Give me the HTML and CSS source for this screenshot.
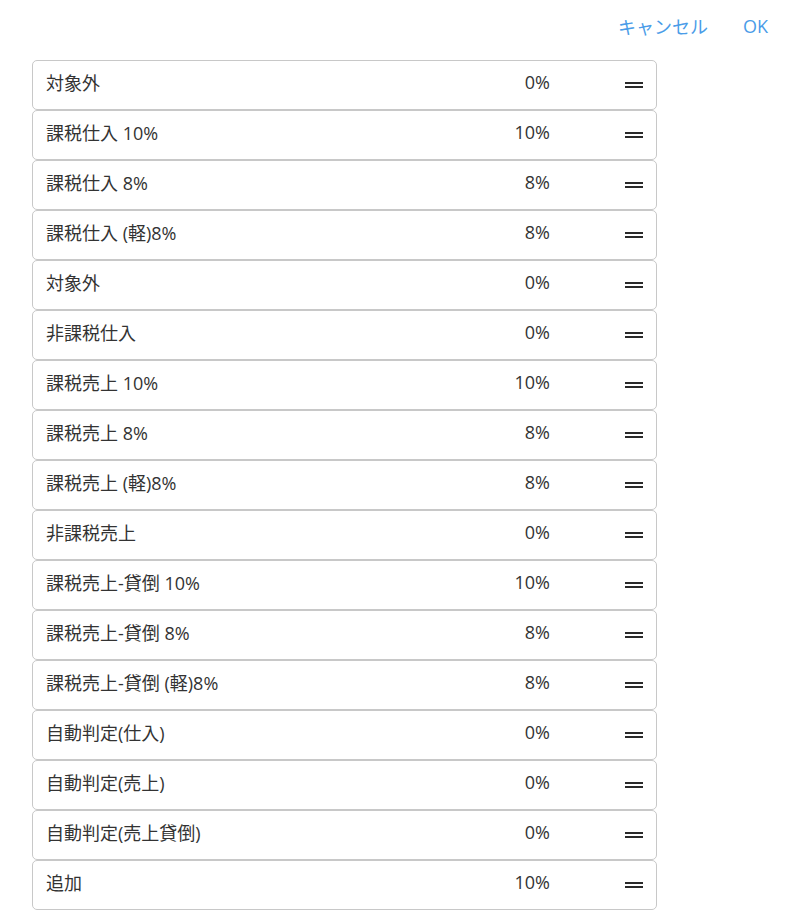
FILE: index.html
```html
<!DOCTYPE html>
<html lang="ja">
<head>
<meta charset="utf-8">
<title>税区分</title>
<link rel="stylesheet" href="styles.css">
</head>
<body>
<header class="topbar">
  <button class="link-btn">キャンセル</button>
  <button class="link-btn ok">OK</button>
</header>
<ul class="tax-list">
  <li class="tax-row"><span class="label">対象外</span><span class="rate">0%</span><span class="handle"></span></li>
  <li class="tax-row"><span class="label">課税仕入 10%</span><span class="rate">10%</span><span class="handle"></span></li>
  <li class="tax-row"><span class="label">課税仕入 8%</span><span class="rate">8%</span><span class="handle"></span></li>
  <li class="tax-row"><span class="label">課税仕入 (軽)8%</span><span class="rate">8%</span><span class="handle"></span></li>
  <li class="tax-row"><span class="label">対象外</span><span class="rate">0%</span><span class="handle"></span></li>
  <li class="tax-row"><span class="label">非課税仕入</span><span class="rate">0%</span><span class="handle"></span></li>
  <li class="tax-row"><span class="label">課税売上 10%</span><span class="rate">10%</span><span class="handle"></span></li>
  <li class="tax-row"><span class="label">課税売上 8%</span><span class="rate">8%</span><span class="handle"></span></li>
  <li class="tax-row"><span class="label">課税売上 (軽)8%</span><span class="rate">8%</span><span class="handle"></span></li>
  <li class="tax-row"><span class="label">非課税売上</span><span class="rate">0%</span><span class="handle"></span></li>
  <li class="tax-row"><span class="label">課税売上-貸倒 10%</span><span class="rate">10%</span><span class="handle"></span></li>
  <li class="tax-row"><span class="label">課税売上-貸倒 8%</span><span class="rate">8%</span><span class="handle"></span></li>
  <li class="tax-row"><span class="label">課税売上-貸倒 (軽)8%</span><span class="rate">8%</span><span class="handle"></span></li>
  <li class="tax-row"><span class="label">自動判定(仕入)</span><span class="rate">0%</span><span class="handle"></span></li>
  <li class="tax-row"><span class="label">自動判定(売上)</span><span class="rate">0%</span><span class="handle"></span></li>
  <li class="tax-row"><span class="label">自動判定(売上貸倒)</span><span class="rate">0%</span><span class="handle"></span></li>
  <li class="tax-row"><span class="label">追加</span><span class="rate">10%</span><span class="handle"></span></li>
</ul>
</body>
</html>
```
FILE: styles.css
```css
html, body {
  margin: 0;
  padding: 0;
  background: #ffffff;
}
body {
  font-family: "Open Sans", "Noto Sans CJK JP", sans-serif;
  font-size: 18px;
  color: #333333;
}
.topbar {
  height: 60px;
  display: flex;
  justify-content: flex-end;
  align-items: center;
  padding: 0 21px 8px 0;
  box-sizing: border-box;
  gap: 35px;
}
.link-btn {
  background: none;
  border: none;
  padding: 0;
  font: inherit;
  font-size: 18px;
  color: #4a9ce8;
  cursor: pointer;
}
.tax-list {
  list-style: none;
  margin: 0 0 0 32px;
  padding: 0;
  width: 625px;
}
.tax-row {
  height: 50px;
  box-sizing: border-box;
  border: 1px solid #c8c8c8;
  border-radius: 5px;
  display: flex;
  align-items: center;
  padding: 0 13px 0 13px;
}
.label {
  flex: 1;
  white-space: nowrap;
  padding-bottom: 6px;
}
.rate {
  width: 80px;
  text-align: right;
  padding-bottom: 6px;
}
.handle {
  width: 18px;
  height: 6px;
  margin-left: 75px;
  margin-bottom: 1px;
  border-top: 2px solid #2a2a2a;
  border-bottom: 2px solid #2a2a2a;
  box-sizing: border-box;
}
```
